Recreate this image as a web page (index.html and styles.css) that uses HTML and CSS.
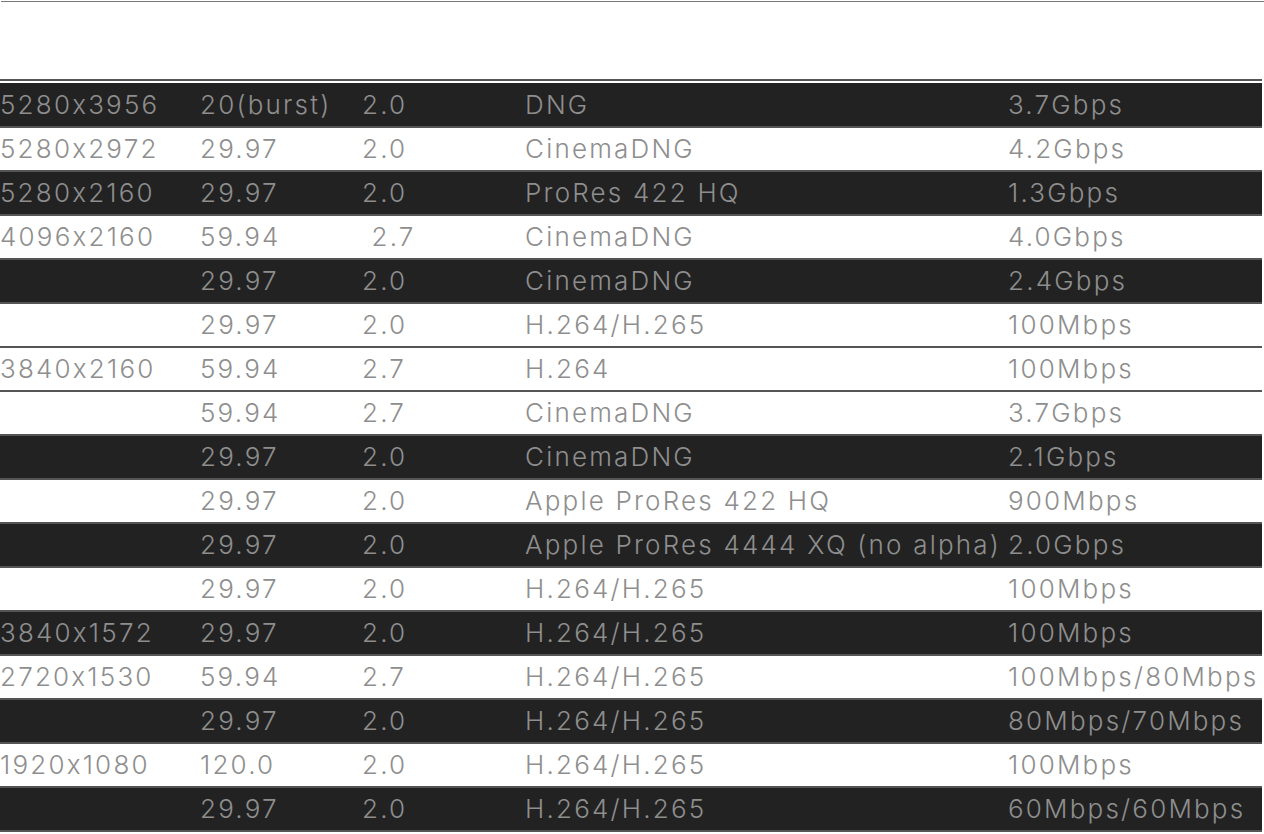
FILE: index.html
```html
<!DOCTYPE html>
<html lang="en">
<head>
<meta charset="utf-8">
<title>Specs</title>
<link rel="stylesheet" href="styles.css">
</head>
<body>
<div class="top-rule"></div>
<div class="spec">
  <table class="spec-table">
    <colgroup>
      <col class="c1"><col class="c2"><col class="c3"><col class="c4"><col class="c5">
    </colgroup>
    <tbody>
      <tr class="dark"><td>5280x3956</td><td>20(burst)</td><td>2.0</td><td>DNG</td><td>3.7Gbps</td></tr>
      <tr><td>5280x2972</td><td>29.97</td><td>2.0</td><td>CinemaDNG</td><td>4.2Gbps</td></tr>
      <tr class="dark"><td>5280x2160</td><td>29.97</td><td>2.0</td><td>ProRes 422 HQ</td><td>1.3Gbps</td></tr>
      <tr><td>4096x2160</td><td>59.94</td><td>&nbsp;2.7</td><td>CinemaDNG</td><td>4.0Gbps</td></tr>
      <tr class="dark"><td></td><td>29.97</td><td>2.0</td><td>CinemaDNG</td><td>2.4Gbps</td></tr>
      <tr><td></td><td>29.97</td><td>2.0</td><td>H.264/H.265</td><td>100Mbps</td></tr>
      <tr><td>3840x2160</td><td>59.94</td><td>2.7</td><td>H.264</td><td>100Mbps</td></tr>
      <tr><td></td><td>59.94</td><td>2.7</td><td>CinemaDNG</td><td>3.7Gbps</td></tr>
      <tr class="dark"><td></td><td>29.97</td><td>2.0</td><td>CinemaDNG</td><td>2.1Gbps</td></tr>
      <tr><td></td><td>29.97</td><td>2.0</td><td>Apple ProRes 422 HQ</td><td>900Mbps</td></tr>
      <tr class="dark"><td></td><td>29.97</td><td>2.0</td><td>Apple ProRes 4444 XQ (no alpha)</td><td>2.0Gbps</td></tr>
      <tr><td></td><td>29.97</td><td>2.0</td><td>H.264/H.265</td><td>100Mbps</td></tr>
      <tr class="dark"><td>3840x1572</td><td>29.97</td><td>2.0</td><td>H.264/H.265</td><td>100Mbps</td></tr>
      <tr><td>2720x1530</td><td>59.94</td><td>2.7</td><td>H.264/H.265</td><td>100Mbps/80Mbps</td></tr>
      <tr class="dark"><td></td><td>29.97</td><td>2.0</td><td>H.264/H.265</td><td>80Mbps/70Mbps</td></tr>
      <tr><td>1920x1080</td><td>120.0</td><td>2.0</td><td>H.264/H.265</td><td>100Mbps</td></tr>
      <tr class="dark"><td></td><td>29.97</td><td>2.0</td><td>H.264/H.265</td><td>60Mbps/60Mbps</td></tr>
    </tbody>
  </table>
</div>
</body>
</html>
```

FILE: styles.css
```css
html, body {
  margin: 0;
  padding: 0;
  background: #fff;
}
body {
  font-family: "Inter", "Lato", "Liberation Sans", sans-serif;
  font-weight: 300;
  color: #8e8e8e;
  width: 1264px;
  height: 834px;
  overflow: hidden;
}
.top-rule {
  margin: 1px 0 0 1px;
  height: 1px;
  background: #777;
}
.spec {
  margin-top: 77px;
  width: 1262px;
  border-top: 2px solid #555;
  padding-top: 2px;
}
.spec-table {
  width: 1262px;
  border-collapse: collapse;
  table-layout: fixed;
}
.c1 { width: 200px; }
.c2 { width: 162px; }
.c3 { width: 163px; }
.c4 { width: 483px; }
.c5 { width: 254px; }
.spec-table tr {
  height: 44px;
  border-bottom: 2px solid #555;
}
.spec-table tr.dark {
  background: #222;
}
.spec-table td {
  padding: 0;
  height: 42px;
  font-size: 26px;
  letter-spacing: 2.2px;
  white-space: nowrap;
  vertical-align: middle;
  line-height: 42px;
  overflow: visible;
}
```
